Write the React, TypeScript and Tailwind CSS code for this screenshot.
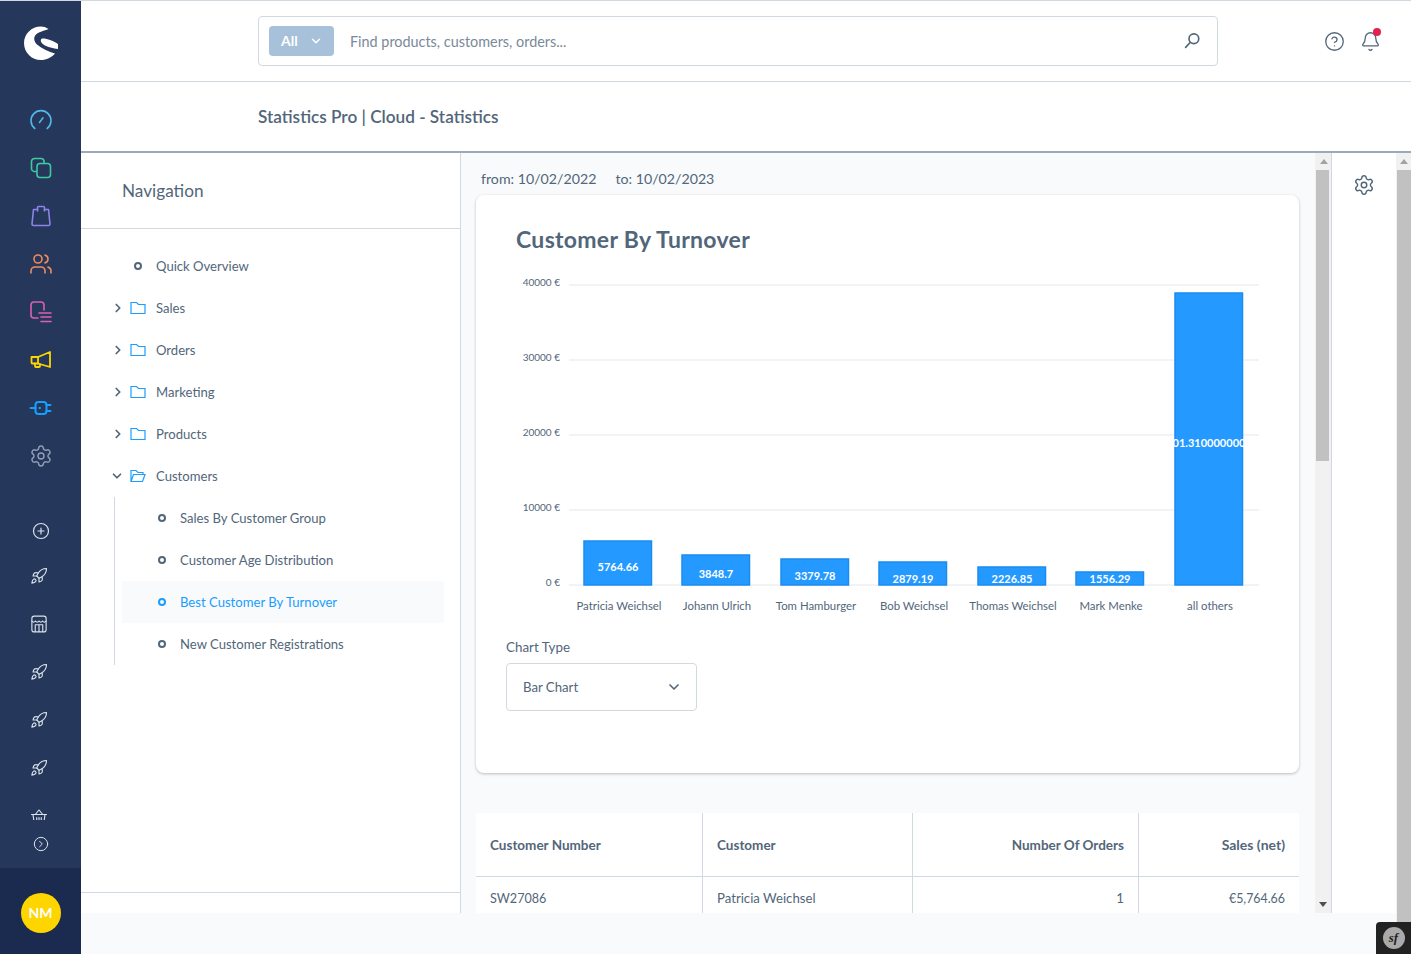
import { Bell, ChevronDown, ChevronRight, CircleChevronRight, CirclePlus, CircleHelp, Rocket, Settings, Users } from 'lucide-react';
import type { ReactNode } from 'react';

function Ico({ children, className, sw = 1.6 }: { children: ReactNode; className: string; sw?: number }) {
  return (
    <svg viewBox="0 0 24 24" fill="none" stroke="currentColor" strokeWidth={sw} strokeLinecap="round" strokeLinejoin="round" className={className}>
      {children}
    </svg>
  );
}

function SideIcon({ children }: { children: ReactNode }) {
  return <div className="h-12 flex items-center justify-center">{children}</div>;
}

function RocketItem() {
  return (
    <div className="h-12 flex items-center justify-center pr-1">
      <Rocket className="w-[18px] h-[18px] text-[#dbe3ec]" strokeWidth={1.5} />
    </div>
  );
}

function Sidebar() {
  return (
    <aside className="w-[81px] shrink-0 flex flex-col bg-[#25385b]">
      {/* Logo */}
      <div className="h-[95px] flex items-start justify-center pt-[25px]">
        <svg viewBox="0 0 34 34" className="w-[34px] h-[34px]" fill="#fff">
          <path d="M24.500 3C22 1.300 19.500 .5 17 .5C7.500 .5 0 8 0 17C0 26.500 7.500 34 17 34C22.500 34 27.500 31.500 31 27.500C25 25.500 18 23 13 18.500C9.500 15 9.500 11 12 8.500C15 5.500 20 5 24.500 3Z" />
          <path d="M18 12.500C22 12 30 15 34 18L34 23C30 22.500 23 21 19.500 18.500C16.500 16.500 16 13.500 18 12.500Z" />
        </svg>
      </div>

      <SideIcon>
        <Ico className="w-6 h-6 text-[#4fb8e6]">
          <path d="M5.800 20.500a10 10 0 1 1 12.400 0" />
          <path d="M10.500 14.500l3.500-4.700" />
        </Ico>
      </SideIcon>
      <SideIcon>
        <Ico className="w-6 h-6 text-[#3ec9a0]">
          <path d="M7 15.500H5a3 3 0 0 1-2.500-2.500V5.500A3 3 0 0 1 5.500 2.500H12a3 3 0 0 1 3 2.500V7.500" />
          <rect x="8" y="7.500" width="13.500" height="14" rx="3" />
        </Ico>
      </SideIcon>
      <SideIcon>
        <Ico className="w-6 h-6 text-[#8f83e8]">
          <path d="M8.500 5.500H4.500L3 20a1.500 1.500 0 0 0 1.500 1.500h15A1.500 1.500 0 0 0 21 20L19.500 5.500h-4" />
          <path d="M8.500 7V3.500Q8.500 2.500 9.500 2.500h5Q15.500 2.500 15.500 3.500V7" />
        </Ico>
      </SideIcon>
      <SideIcon>
        <Users className="w-6 h-6 text-[#f08a5d]" strokeWidth={1.6} />
      </SideIcon>
      <SideIcon>
        <Ico className="w-6 h-6 text-[#dc5fb7]">
          <path d="M9 18H5a3 3 0 0 1-3-3V5a3 3 0 0 1 3-3h7a3 3 0 0 1 3 3v5" />
          <path d="M10 13h12M12 17h10M12 21.500h10" />
        </Ico>
      </SideIcon>
      <SideIcon>
        <Ico className="w-6 h-6 text-[#ffd500]" sw={1.8}>
          <path d="M2.500 9H9L21 4v15L9 15.500H3.500a1 1 0 0 1-1-1z" />
          <path d="M9 9v6.500" />
          <path d="M6 15.500V18a1 1 0 0 0 1 1h3a1 1 0 0 0 1-1v-1.700" />
        </Ico>
      </SideIcon>
      <SideIcon>
        <Ico className="w-6 h-6 text-[#189eff]" sw={2}>
          <rect x="6.500" y="6" width="11" height="12" rx="3" />
          <path d="M1.500 12h5M17.500 9h4M17.500 15h4M10.500 12h.5" />
        </Ico>
      </SideIcon>
      <SideIcon>
        <Settings className="w-6 h-6 text-[#8fa0b5]" strokeWidth={1.4} />
      </SideIcon>

      <div className="h-[311px] mt-[29px] overflow-hidden">
        <div className="h-[43px] flex items-center justify-center">
          <CirclePlus className="w-[18px] h-[18px] text-[#dbe3ec]" strokeWidth={1.6} />
        </div>
        <RocketItem />
        <div className="h-12 flex items-center justify-center pr-1">
          <Ico className="w-[18px] h-[20px] text-[#dbe3ec]" sw={1.5}>
            <rect x="2.500" y="1.500" width="19" height="21" rx="3" />
            <path d="M2.500 8q2.400 3 4.750 0q2.400 3 4.750 0q2.400 3 4.750 0q2.400 3 4.750 0" />
            <path d="M7 22v-9h10v9M12 13v9" />
          </Ico>
        </div>
        <RocketItem />
        <RocketItem />
        <RocketItem />
        <div className="h-12 flex items-center justify-center pr-1">
          <Ico className="w-[18px] h-[18px] text-[#dbe3ec]" sw={1.5}>
            <path d="M7 10l5-6 5 6M2 10h20M4 10l1.500 11h13L20 10M9 14v4M12 14v4M15 14v4" />
          </Ico>
        </div>
      </div>

      <div className="h-12 flex items-center justify-center">
        <CircleChevronRight className="w-4 h-4 text-[#dbe3ec]" strokeWidth={1.5} />
      </div>

      <div className="flex-1 bg-[#1b2b50] flex items-center justify-center pt-1">
        <div className="w-10 h-10 rounded-full bg-[#ffd500] flex items-center justify-center text-white font-bold text-sm">NM</div>
      </div>
    </aside>
  );
}

const topItems = ['Sales', 'Orders', 'Marketing', 'Products'];
const subItems = ['Sales By Customer Group', 'Customer Age Distribution', 'Best Customer By Turnover', 'New Customer Registrations'];

function Dot({ active }: { active?: boolean }) {
  return <span className={`block w-2 h-2 rounded-full border-2 ${active ? 'border-[#189eff]' : 'border-[#52667a]'}`} />;
}

function NavPanel() {
  return (
    <div className="w-[380px] shrink-0 bg-white border-r border-[#d1d9e0] flex flex-col">
      <div className="h-[76px] shrink-0 border-b border-[#d1d9e0] flex items-center pl-[41px] text-[17.2px] text-[#52667a]">Navigation</div>
      <div className="flex-1 pt-4 text-[13.1px] text-[#52667a]">
        <div className="h-[42px] flex items-center pl-[53px]">
          <Dot />
          <span className="ml-[14px] pt-px">Quick Overview</span>
        </div>
        {topItems.map((t) => (
          <div key={t} className="h-[42px] flex items-center pl-[30px]">
            <ChevronRight className="w-[14px] h-[14px] text-[#52667a]" strokeWidth={3} />
            <svg viewBox="0 0 16 14" fill="none" stroke="#189eff" strokeWidth="1.2" className="w-4 h-[14px] ml-[5px]">
              <path d="M1 1.500h5.500l2 2H15v9H1z" />
            </svg>
            <span className="ml-[10px] pt-px">{t}</span>
          </div>
        ))}
        <div className="h-[42px] flex items-center pl-[29px]">
          <ChevronDown className="w-[14px] h-[14px] text-[#52667a]" strokeWidth={3} />
          <svg viewBox="0 0 16 14" fill="none" stroke="#189eff" strokeWidth="1.2" className="w-4 h-[14px] ml-[6px]">
            <path d="M1 12.500v-11h5l2 2h5v2M1 12.500h11.500L15 5.500H3.500z" />
          </svg>
          <span className="ml-[10px] pt-px">Customers</span>
        </div>
        <div className="ml-[33px] mr-4 border-l border-[#d1d9e0] pl-[7px]">
          {subItems.map((s, i) => (
            <div key={s} className={`h-[42px] flex items-center pl-[36px] ${i === 2 ? 'bg-[#f9fafc] text-[#189eff]' : ''}`}>
              <Dot active={i === 2} />
              <span className="ml-[14px] pt-px">{s}</span>
            </div>
          ))}
        </div>
      </div>
      <div className="h-[21px] shrink-0 border-t border-[#d1d9e0]" />
    </div>
  );
}

const bars = [
  { name: 'Patricia Weichsel', x: 584, top: 541, label: '5764.66', ly: 571 },
  { name: 'Johann Ulrich', x: 682, top: 555, label: '3848.7', ly: 578 },
  { name: 'Tom Hamburger', x: 781, top: 559, label: '3379.78', ly: 580 },
  { name: 'Bob Weichsel', x: 879, top: 562, label: '2879.19', ly: 583 },
  { name: 'Thomas Weichsel', x: 978, top: 567, label: '2226.85', ly: 583 },
  { name: 'Mark Menke', x: 1076, top: 572, label: '1556.29', ly: 583 },
  { name: 'all others', x: 1175, top: 293, label: '01.310000000', ly: 447 },
];

const ticks = [
  { y: 285, t: '40000 €' },
  { y: 360, t: '30000 €' },
  { y: 435, t: '20000 €' },
  { y: 510, t: '10000 €' },
  { y: 585, t: '0 €' },
];

function Chart() {
  return (
    <svg viewBox="476 270 823 360" className="block w-[823px] h-[360px]">
      {ticks.map((t) => (
        <g key={t.y}>
          <line x1="569" x2="1259" y1={t.y} y2={t.y} stroke="#e3e8ee" />
          <text x="560" y={t.y + 1} textAnchor="end" fontSize="10" fill="#52667a">
            {t.t}
          </text>
        </g>
      ))}
      {bars.map((b) => (
        <g key={b.name}>
          <rect x={b.x} y={b.top} width="67.500" height={585 - b.top} fill="#2499ff" stroke="#1a8cf0" strokeWidth="1.500" />
          <text x={b.x + 34} y={b.ly} textAnchor="middle" fontSize="11" fontWeight="700" fill="#fff">
            {b.label}
          </text>
          <text x={b.x + 35} y="610" textAnchor="middle" fontSize="11.400" fill="#52667a">
            {b.name}
          </text>
        </g>
      ))}
    </svg>
  );
}

function TrackUp() {
  return (
    <div className="h-[17px] flex items-center justify-center">
      <span className="block w-0 h-0 border-x-4 border-x-transparent border-b-[5px] border-b-[#a3a3a3]" />
    </div>
  );
}

function Content() {
  return (
    <div className="flex-1 min-w-0 bg-[#f9fafc] overflow-hidden text-[#52667a]">
      <div className="pt-[14px] pl-5 h-[42px] text-[14.2px] leading-6 flex gap-[19px]">
        <span>from: 10/02/2022</span>
        <span>to: 10/02/2023</span>
      </div>
      <div className="ml-[15px] w-[823px] h-[578px] bg-white rounded-lg shadow-[0_1px_3px_rgba(0,0,0,0.25)]">
        <h2 className="pt-[29px] pl-10 text-[23px] leading-[30px] font-bold tracking-[0.3px]">Customer By Turnover</h2>
        <div className="mt-4">
          <Chart />
        </div>
        <div className="mt-2 pl-[30px] text-[13.4px] leading-[18px]">Chart Type</div>
        <div className="mt-[7px] ml-[30px] w-[191px] h-12 rounded border border-[#d1d9e0] flex items-center justify-between pl-4 pr-[14px] text-[13.2px]">
          <span className="pt-px">Bar Chart</span>
          <ChevronDown className="w-4 h-4" strokeWidth={2.5} />
        </div>
      </div>
      <div className="mt-10 ml-[15px] w-[823px] bg-white grid grid-cols-[227px_210px_226px_160px] text-[13.2px]">
        <div className="h-16 border-b border-r border-[#d1d9e0] flex items-center pl-[14px] pt-px font-bold text-[13.5px]">Customer Number</div>
        <div className="h-16 border-b border-r border-[#d1d9e0] flex items-center pl-[14px] pt-px font-bold text-[13.5px]">Customer</div>
        <div className="h-16 border-b border-r border-[#d1d9e0] flex items-center justify-end pr-[14px] pt-px font-bold text-[13.5px]">Number Of Orders</div>
        <div className="h-16 border-b border-[#d1d9e0] flex items-center justify-end pr-[14px] font-bold text-[14px]">Sales (net)</div>
        <div className="h-[44px] border-r border-[#d1d9e0] flex items-center pl-[14px] text-[12.6px]">SW27086</div>
        <div className="h-[44px] border-r border-[#d1d9e0] flex items-center pl-[14px]">Patricia Weichsel</div>
        <div className="h-[44px] border-r border-[#d1d9e0] flex items-center justify-end pr-[14px]">1</div>
        <div className="h-[44px] flex items-center justify-end pr-[14px] text-[12.4px]">€5,764.66</div>
      </div>
    </div>
  );
}

export default function App() {
  return (
    <div className="relative h-screen flex overflow-hidden border-t border-[#d1d9e0] bg-white font-['Lato','Noto_Sans',sans-serif]">
      <Sidebar />
      <div className="flex-1 min-w-0 flex flex-col">
        {/* Top bar */}
        <header className="h-[81px] shrink-0 border-b border-[#d1d9e0] flex items-center pl-[177px] pr-[30px]">
          <div className="w-[960px] h-[50px] -mt-[1px] rounded border border-[#d1d9e0] flex items-center pl-[10px] pr-4">
            <div className="w-[65px] h-[30px] rounded bg-[#a8c1da] text-white font-bold text-sm flex items-center pl-3 gap-[11px]">
              All
              <ChevronDown className="w-[14px] h-[14px]" strokeWidth={2.5} />
            </div>
            <span className="ml-4 flex-1 text-[14.4px] text-[#7a8a99] pt-[2px]">Find products, customers, orders...</span>
            <Ico className="w-[18px] h-[18px] text-[#52667a]" sw={2.2}>
              <circle cx="14.500" cy="9" r="6.500" />
              <path d="M9.500 14L3.500 20.500" />
            </Ico>
          </div>
          <div className="ml-auto flex items-center gap-[15px] pt-px">
            <CircleHelp className="w-[21px] h-[21px] text-[#52667a]" strokeWidth={1.5} />
            <div className="relative">
              <Bell className="w-[21px] h-[21px] text-[#52667a]" strokeWidth={1.5} />
              <span className="absolute -top-[3px] right-0 w-2 h-2 rounded-full bg-[#e52050]" />
            </div>
          </div>
        </header>

        {/* Page title */}
        <div className="h-[71px] shrink-0 border-b-2 border-[#9aaab9] flex items-center pl-[177px] text-[17.2px] font-semibold text-[#52667a]">
          Statistics Pro | Cloud - Statistics
        </div>

        <div className="flex-1 min-h-0 flex">
          <div className="flex-1 min-w-0 flex flex-col">
            <div className="h-[760px] shrink-0 flex">
              <NavPanel />
              <Content />
              {/* content scrollbar */}
              <div className="w-4 shrink-0 bg-[#f1f1f1] flex flex-col pl-px">
                <TrackUp />
                <div className="w-[13px] h-[291px] bg-[#c1c1c1]" />
                <div className="flex-1" />
                <div className="h-[17px] flex items-center justify-center pr-px">
                  <span className="block w-0 h-0 border-x-4 border-x-transparent border-t-[5px] border-t-[#505050]" />
                </div>
              </div>
              <div className="w-[65px] shrink-0 bg-white border-l border-[#d1d9e0] flex justify-center pt-[21px]">
                <Settings className="w-[22px] h-[22px] text-[#52667a]" strokeWidth={1.6} />
              </div>
            </div>
            <div className="flex-1 bg-[#f9fafc]" />
          </div>
          {/* page scrollbar */}
          <div className="w-[15px] shrink-0 bg-[#f1f1f1] flex flex-col pl-px">
            <TrackUp />
            <div className="flex-1 bg-[#c1c1c1]" />
          </div>
        </div>
      </div>

      {/* Symfony toolbar badge */}
      <div className="absolute right-0 bottom-0 w-[35px] h-8 bg-[#222] rounded-tl flex items-center justify-center">
        <span className="w-[22px] h-[22px] rounded-full bg-[#aaa] flex items-center justify-center text-[#222] italic font-bold text-[13px] font-['Liberation_Serif',serif]">sf</span>
      </div>
    </div>
  );
}
